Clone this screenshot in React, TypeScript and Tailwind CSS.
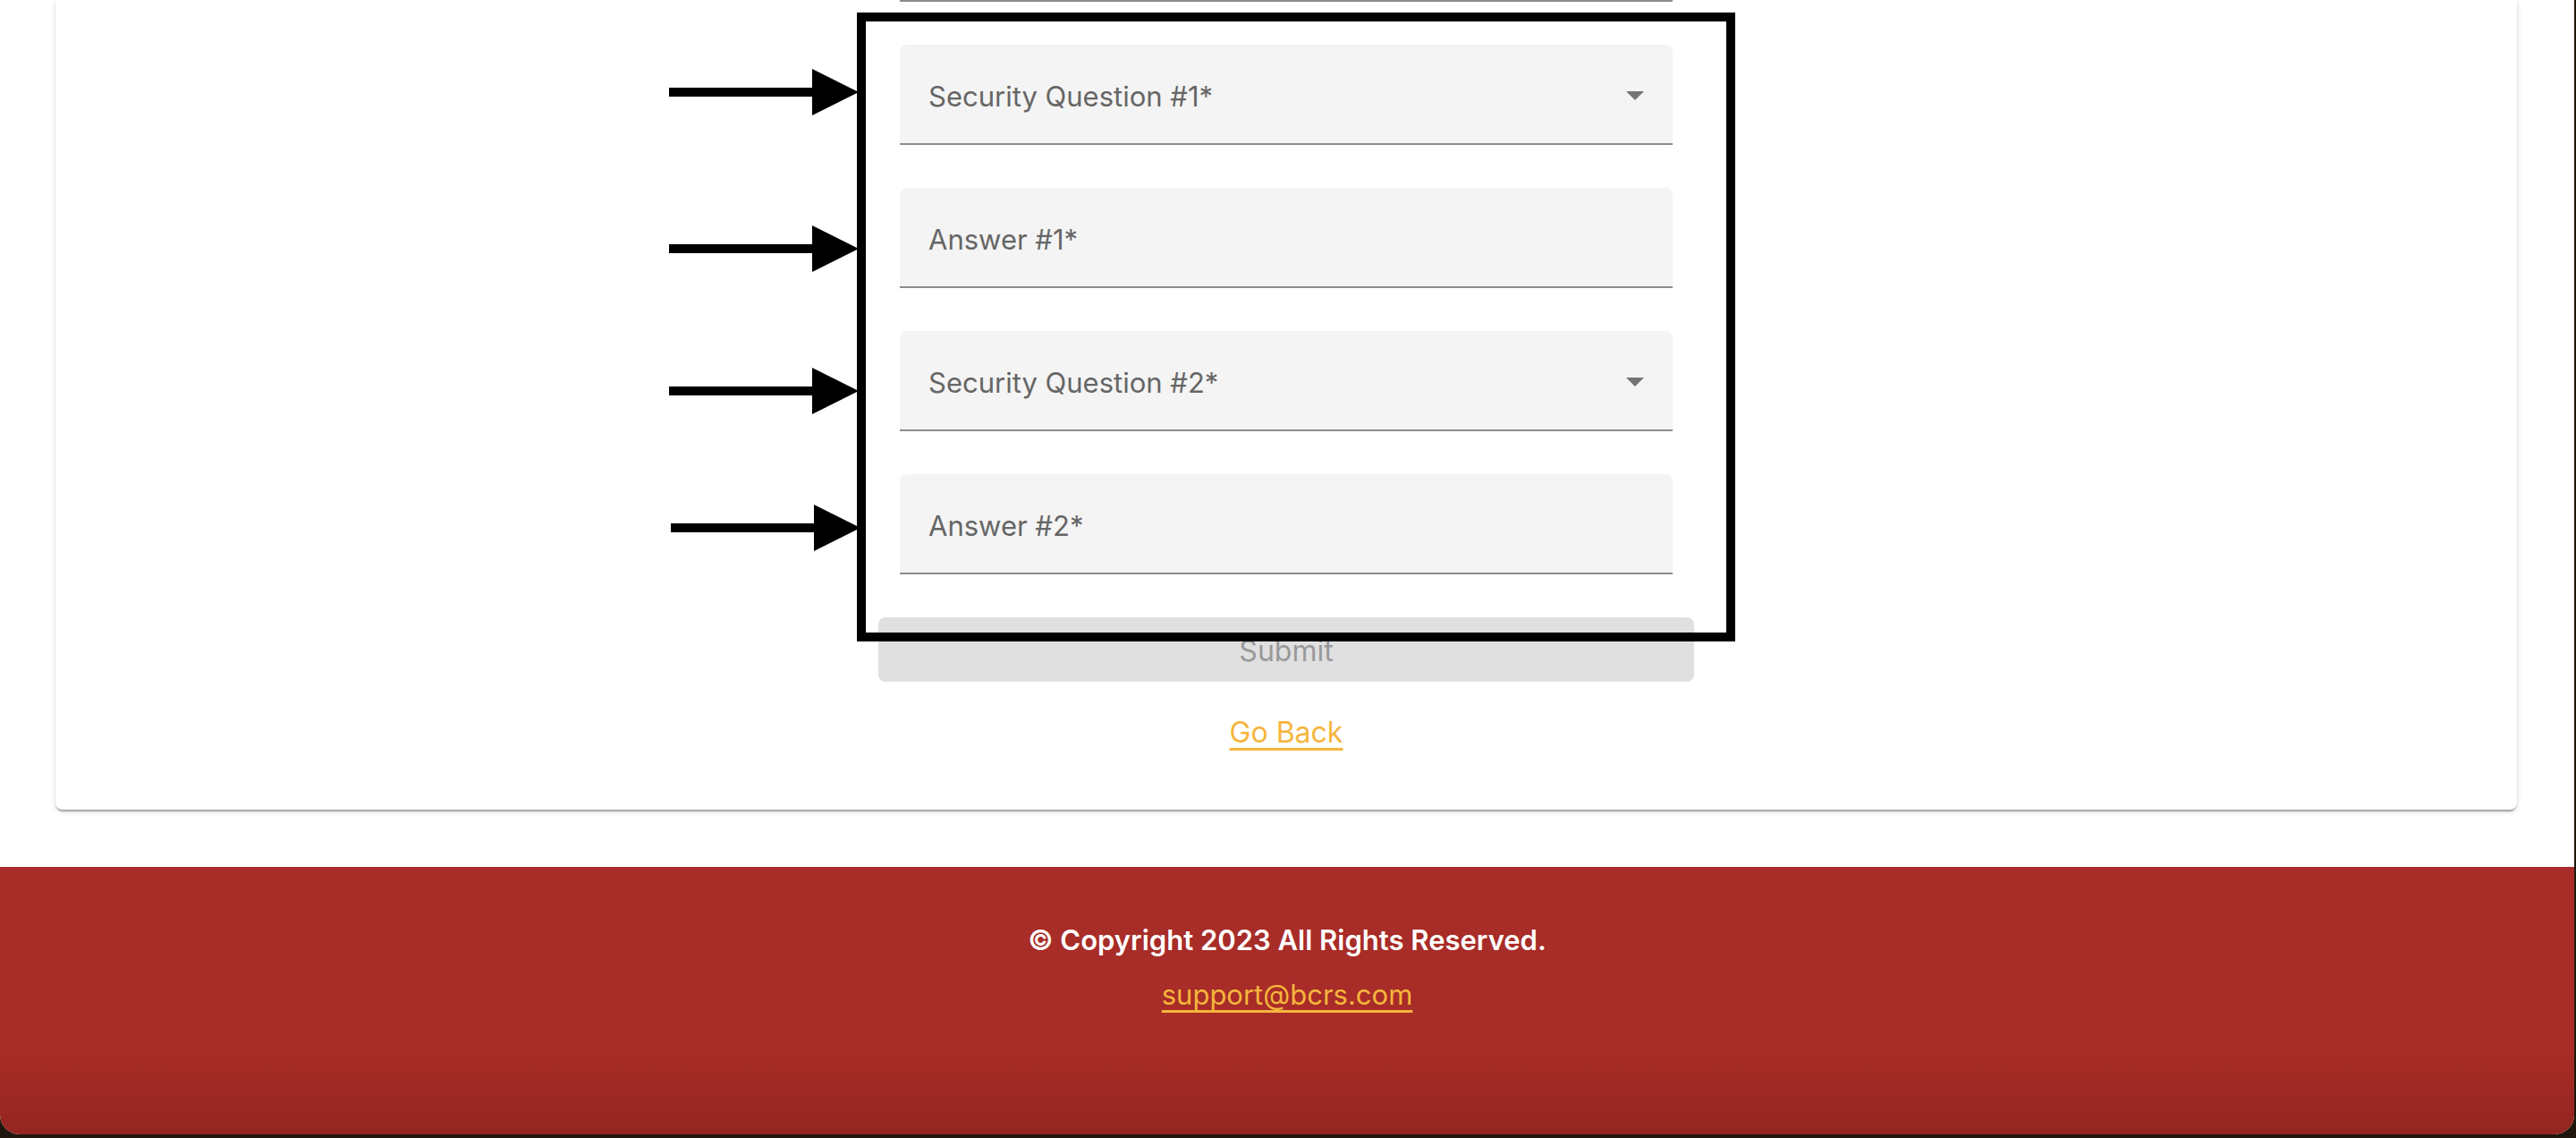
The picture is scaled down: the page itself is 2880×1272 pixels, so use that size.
import React from "react";

const FIELDS = [
  { key: "q1", label: "Security Question #1*", select: true },
  { key: "a1", label: "Answer #1*", select: false },
  { key: "q2", label: "Security Question #2*", select: true },
  { key: "a2", label: "Answer #2*", select: false },
] as const;

// arrow centres, px from the top of the form column
const ARROWS = [
  { top: 103, left: -234 },
  { top: 278, left: -234 },
  { top: 437, left: -234 },
  { top: 590, left: -232 },
];

function Arrow({ top, left }: { top: number; left: number }) {
  return (
    <svg
      className="absolute"
      style={{ top: top - 26, left }}
      width="212"
      height="52"
      viewBox="0 0 212 52"
      aria-hidden
    >
      <rect x="0" y="21" width="162" height="10" fill="#000" />
      <polygon points="160,0 212,26 160,52" fill="#000" />
    </svg>
  );
}

function FilledField({ label, select }: { label: string; select: boolean }) {
  return (
    <div className="relative mx-[24px] flex h-[112px] items-center rounded-t-[8px] border-b-2 border-[#8c8c8c] bg-[#f4f4f4] pl-[32px] pt-[5px]">
      <span className="text-[31px] leading-none text-[#666666]">{label}</span>
      {select ? (
        <svg className="absolute right-[32px] top-[52px]" width="20" height="10" viewBox="0 0 20 10" aria-hidden>
          <polygon points="0,0 20,0 10,10" fill="#747474" />
        </svg>
      ) : null}
    </div>
  );
}

export default function App() {
  return (
    <div className="h-[1272px] w-full overflow-hidden bg-[#1f170d] [font-family:Inter,'Liberation_Sans',sans-serif]">
      <div className="flex h-[1268px] w-[2878px] flex-col overflow-hidden rounded-b-[22px] bg-white">
        <div className="mx-[62px] mr-[64px] rounded-b-[8px] bg-white pb-[62px] shadow-[0_4px_2px_-2px_rgba(0,0,0,0.2),0_2px_2px_0_rgba(0,0,0,0.14),0_2px_6px_0_rgba(0,0,0,0.12)]">
          <div className="relative mx-auto flex w-[912px] flex-col">
            <div className="mx-[24px] h-[2px] bg-[#8c8c8c]" />

            <div className="mt-[48px] flex flex-col gap-[48px]">
              {FIELDS.map((f) => (
                <FilledField key={f.key} label={f.label} select={f.select} />
              ))}
            </div>

            <button
              type="button"
              disabled
              className="mt-[48px] flex h-[72px] items-center justify-center rounded-[8px] bg-[#e0e0e0] pt-[3px] text-[32px] text-[#999999]"
            >
              Submit
            </button>

            <div className="mt-[33px] flex justify-center">
              <a href="#" className="text-[32px] leading-[48px] text-[#f5b53d] underline underline-offset-[6px]">
                Go Back
              </a>
            </div>

            {/* annotation overlay */}
            <div className="pointer-events-none absolute left-[-24px] top-[14px] h-[703px] w-[982px] border-[10px] border-black" />
            {ARROWS.map((a, i) => (
              <Arrow key={i} top={a.top} left={a.left} />
            ))}
          </div>
        </div>

        <footer className="mt-[64px] flex flex-1 flex-col items-center bg-[linear-gradient(to_bottom,#a82c27_0%,#a82c27_68%,#9a2722_92%,#932520_100%)] pt-[62px]">
          <p className="text-[31px] font-semibold leading-[40px] text-white">© Copyright 2023 All Rights Reserved.</p>
          <a href="#" className="mt-[21px] text-[31px] leading-[40px] text-[#f5b53d] underline underline-offset-[6px]">
            support@bcrs.com
          </a>
        </footer>
      </div>
    </div>
  );
}
